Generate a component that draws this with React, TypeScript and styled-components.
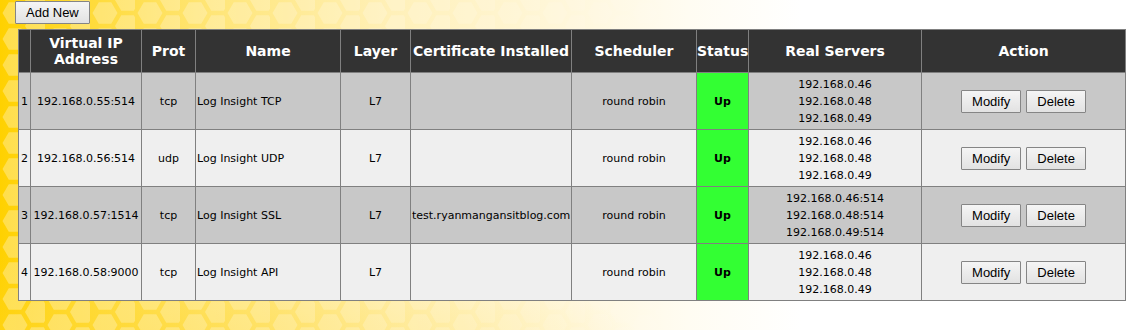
import React from "react";
import styled, { createGlobalStyle } from "styled-components";

const GlobalStyle = createGlobalStyle`
  html, body {
    margin: 0;
    padding: 0;
    background: #ffffff;
  }
  body {
    font-family: "DejaVu Sans", Verdana, sans-serif;
    font-size: 11px;
    color: #000;
  }
`;

const Page = styled.div`
  position: relative;
  width: 1146px;
  height: 330px;
  overflow: hidden;
  background:
    radial-gradient(ellipse 520px 90px at 120px 340px, rgba(255, 214, 40, 0.55), rgba(255, 214, 40, 0) 100%),
    linear-gradient(
      to right,
      #ffd100 0%,
      #ffd92e 6%,
      #ffe575 18%,
      #fff0b8 34%,
      #fff7dc 50%,
      #fffcf2 60%,
      #ffffff 70%
    );
`;

const Backdrop = styled.svg`
  position: absolute;
  inset: 0;
  width: 100%;
  height: 100%;
  pointer-events: none;
`;

const Content = styled.div`
  position: relative;
  display: flex;
  flex-direction: column;
  align-items: flex-start;
  padding: 1px 0 0 15px;
  gap: 5px;
`;

const Button = styled.button`
  height: 23px;
  padding: 0 10px;
  font-family: "Liberation Sans", Arial, sans-serif;
  font-size: 13px;
  color: #000;
  background: linear-gradient(#f5f5f5, #e2e2e2);
  border: 1px solid #858585;
  border-radius: 1px;
  cursor: pointer;
`;

const TableWrap = styled.div`
  padding-left: 3px;
`;

const Table = styled.table`
  table-layout: fixed;
  width: 1108px;
  border-collapse: collapse;
  font-family: "DejaVu Sans", Verdana, sans-serif;
  font-size: 11px;
`;

const HeadRow = styled.tr`
  height: 43px;
  background: #333333;
`;

const Th = styled.th`
  border: 1px solid #808080;
  padding: 0;
  color: #ffffff;
  font-size: 14px;
  font-weight: bold;
  line-height: 16px;
  text-align: center;
  vertical-align: middle;
  white-space: nowrap;
  overflow: hidden;
`;

const Row = styled.tr<{ $alt: boolean }>`
  height: 57px;
  background: ${(p) => (p.$alt ? "#efefef" : "#c8c8c8")};
`;

const Td = styled.td<{ $align?: "left" | "center" }>`
  border: 1px solid #808080;
  padding: 0 1px;
  text-align: ${(p) => p.$align ?? "center"};
  vertical-align: middle;
  white-space: nowrap;
  overflow: hidden;
`;

const StatusCell = styled(Td)`
  background: #33ff33;
  font-weight: bold;
`;

const ServerList = styled.div`
  display: flex;
  flex-direction: column;
  align-items: center;
  line-height: 17px;
`;

const Actions = styled.div`
  display: flex;
  justify-content: center;
  gap: 5px;
`;

type Service = {
  vip: string;
  prot: string;
  name: string;
  layer: string;
  cert: string;
  scheduler: string;
  status: string;
  servers: string[];
};

const services: Service[] = [
  {
    vip: "192.168.0.55:514",
    prot: "tcp",
    name: "Log Insight TCP",
    layer: "L7",
    cert: "",
    scheduler: "round robin",
    status: "Up",
    servers: ["192.168.0.46", "192.168.0.48", "192.168.0.49"],
  },
  {
    vip: "192.168.0.56:514",
    prot: "udp",
    name: "Log Insight UDP",
    layer: "L7",
    cert: "",
    scheduler: "round robin",
    status: "Up",
    servers: ["192.168.0.46", "192.168.0.48", "192.168.0.49"],
  },
  {
    vip: "192.168.0.57:1514",
    prot: "tcp",
    name: "Log Insight SSL",
    layer: "L7",
    cert: "test.ryanmangansitblog.com",
    scheduler: "round robin",
    status: "Up",
    servers: ["192.168.0.46:514", "192.168.0.48:514", "192.168.0.49:514"],
  },
  {
    vip: "192.168.0.58:9000",
    prot: "tcp",
    name: "Log Insight API",
    layer: "L7",
    cert: "",
    scheduler: "round robin",
    status: "Up",
    servers: ["192.168.0.46", "192.168.0.48", "192.168.0.49"],
  },
];

const colWidths = [12, 111, 54, 145, 70, 161, 125, 52, 173, 204];

const hexPoints = (cx: number, cy: number, r: number) => {
  const h = r * 0.866;
  return [
    [cx - r, cy],
    [cx - r / 2, cy - h],
    [cx + r / 2, cy - h],
    [cx + r, cy],
    [cx + r / 2, cy + h],
    [cx - r / 2, cy + h],
  ]
    .map((p) => p.join(","))
    .join(" ");
};

const HexBackdrop = () => (
  <Backdrop viewBox="0 0 1146 330" preserveAspectRatio="none">
    <defs>
      <pattern id="hex" width="45" height="26" patternUnits="userSpaceOnUse">
        <polygon points={hexPoints(15, 13, 12.5)} fill="#ffffff" />
        <polygon points={hexPoints(37.5, 0, 12.5)} fill="#ffffff" />
        <polygon points={hexPoints(37.5, 26, 12.5)} fill="#ffffff" />
      </pattern>
      <linearGradient id="fade" x1="0" y1="0" x2="1" y2="0">
        <stop offset="0" stopColor="#fff" stopOpacity="0.3" />
        <stop offset="0.35" stopColor="#fff" stopOpacity="0.2" />
        <stop offset="0.65" stopColor="#fff" stopOpacity="0" />
      </linearGradient>
      <mask id="fadeMask">
        <rect width="1146" height="330" fill="url(#fade)" />
      </mask>
    </defs>
    <rect width="1146" height="330" fill="url(#hex)" mask="url(#fadeMask)" />
  </Backdrop>
);

export default function App() {
  return (
    <>
      <GlobalStyle />
      <Page>
        <HexBackdrop />
        <Content>
          <Button>Add New</Button>
          <TableWrap>
            <Table>
              <colgroup>
                {colWidths.map((w, i) => (
                  <col key={i} style={{ width: w }} />
                ))}
              </colgroup>
              <thead>
                <HeadRow>
                  <Th />
                  <Th>
                    Virtual IP
                    <br />
                    Address
                  </Th>
                  <Th>Prot</Th>
                  <Th>Name</Th>
                  <Th>Layer</Th>
                  <Th>Certificate Installed</Th>
                  <Th>Scheduler</Th>
                  <Th>Status</Th>
                  <Th>Real Servers</Th>
                  <Th>Action</Th>
                </HeadRow>
              </thead>
              <tbody>
                {services.map((s, i) => (
                  <Row key={s.vip} $alt={i % 2 === 1}>
                    <Td>{i + 1}</Td>
                    <Td>{s.vip}</Td>
                    <Td>{s.prot}</Td>
                    <Td $align="left">{s.name}</Td>
                    <Td>{s.layer}</Td>
                    <Td>{s.cert}</Td>
                    <Td>{s.scheduler}</Td>
                    <StatusCell>{s.status}</StatusCell>
                    <Td>
                      <ServerList>
                        {s.servers.map((srv) => (
                          <span key={srv}>{srv}</span>
                        ))}
                      </ServerList>
                    </Td>
                    <Td>
                      <Actions>
                        <Button>Modify</Button>
                        <Button>Delete</Button>
                      </Actions>
                    </Td>
                  </Row>
                ))}
              </tbody>
            </Table>
          </TableWrap>
        </Content>
      </Page>
    </>
  );
}
